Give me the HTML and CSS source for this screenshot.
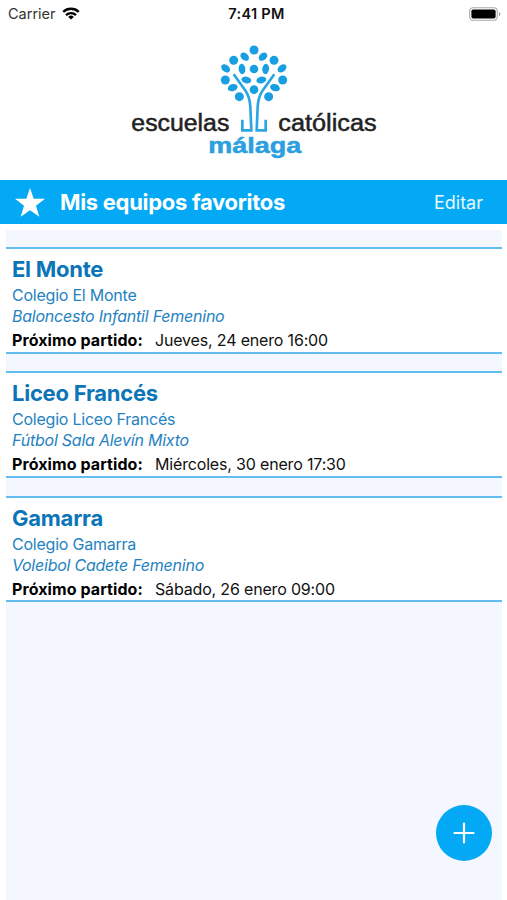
FILE: index.html
```html
<!DOCTYPE html>
<html lang="es">
<head>
<meta charset="utf-8">
<meta name="viewport" content="width=device-width, initial-scale=1">
<title>Mis equipos favoritos</title>
<link rel="stylesheet" href="styles.css">
</head>
<body>
<div class="app">
  <header class="status">
    <div class="carrier"><span class="carrier-name">Carrier</span>
      <svg class="wifi" viewBox="0 0 18 13"><g fill="none" stroke="#000" stroke-width="2.3"><path d="M1.2 4.9a11.2 11.2 0 0 1 15.6 0"/><path d="M4 8.1a7.2 7.2 0 0 1 10 0"/></g><path d="M9 12.6 6.2 9.9a4 4 0 0 1 5.6 0z"/></svg>
    </div>
    <span class="time">7:41 PM</span>
    <svg class="battery" viewBox="0 0 32 14"><rect x=".7" y=".7" width="27.6" height="12.6" rx="3.6" fill="#fff" stroke="#aaa" stroke-width="1.1"/><rect x="2.4" y="2.4" width="24.2" height="9.2" rx="1.8"/><path d="M30 5v4q1.3-.6 1.3-2T30 5" fill="#999"/></svg>
  </header>
  <div class="brand">
    <svg class="logo" viewBox="0 0 810 405" role="img" aria-label="escuelas católicas málaga">
      <g fill="#189fe1">
        <circle cx="402" cy="45" r="13.5"/><circle cx="341" cy="76" r="13.5"/><circle cx="462" cy="76" r="13.5"/>
        <circle cx="402" cy="102" r="13"/><circle cx="316" cy="135" r="13.5"/><circle cx="488" cy="135" r="13.5"/>
        <circle cx="402" cy="164" r="13"/><circle cx="358" cy="185" r="13.5"/><circle cx="446" cy="185" r="13.5"/>
        <ellipse cx="374" cy="65" rx="14.5" ry="10.5" transform="rotate(42 374 65)"/>
        <ellipse cx="429" cy="65" rx="14.5" ry="10.5" transform="rotate(-42 429 65)"/>
        <ellipse cx="317" cy="100" rx="15" ry="10.5" transform="rotate(40 317 100)"/>
        <ellipse cx="486" cy="100" rx="15" ry="10.5" transform="rotate(-40 486 100)"/>
        <ellipse cx="366" cy="102" rx="10" ry="15.5" transform="rotate(-8 366 102)"/>
        <ellipse cx="437" cy="102" rx="10" ry="15.5" transform="rotate(8 437 102)"/>
        <ellipse cx="379" cy="135" rx="15" ry="10" transform="rotate(12 379 135)"/>
        <ellipse cx="424" cy="135" rx="15" ry="10" transform="rotate(-12 424 135)"/>
        <ellipse cx="338" cy="158" rx="15" ry="10.5" transform="rotate(-18 338 158)"/>
        <ellipse cx="465" cy="158" rx="15" ry="10.5" transform="rotate(18 465 158)"/>
      </g>
      <g fill="none" stroke="#2ba6e3" stroke-width="8">
        <path d="M341 118 375 165Q389 184 391 215L394 286H367V254"/>
        <path d="M463 118 429 165Q415 184 413 215L410 286H437V254"/>
      </g>
      <g class="logo-name">
        <text x="34" y="287" textLength="294" lengthAdjust="spacingAndGlyphs">escuelas</text>
        <text x="475" y="287" textLength="295" lengthAdjust="spacingAndGlyphs">católicas</text>
      </g>
      <text class="logo-city" x="265" y="355" textLength="279" lengthAdjust="spacingAndGlyphs">málaga</text>
    </svg>
  </div>
  <div class="bar">
    <svg class="star" viewBox="0 0 30 29"><path d="m15 0 3.700 10.800H30l-9 7 3.300 11L15 22.200 5.700 28.800l3.300-11-9-7h11.300z"/></svg>
    <h1 class="title">Mis equipos favoritos</h1>
    <span class="edit">Editar</span>
  </div>
  <main class="list">
    <article class="card">
      <h2 class="team">El Monte</h2>
      <p class="school">Colegio El Monte</p>
      <p class="league">Baloncesto Infantil Femenino</p>
      <p class="match"><b class="label">Próximo partido:</b><span class="date">Jueves, 24 enero 16:00</span></p>
    </article>
    <article class="card">
      <h2 class="team">Liceo Francés</h2>
      <p class="school">Colegio Liceo Francés</p>
      <p class="league">Fútbol Sala Alevín Mixto</p>
      <p class="match"><b class="label">Próximo partido:</b><span class="date">Miércoles, 30 enero 17:30</span></p>
    </article>
    <article class="card">
      <h2 class="team">Gamarra</h2>
      <p class="school">Colegio Gamarra</p>
      <p class="league">Voleibol Cadete Femenino</p>
      <p class="match"><b class="label">Próximo partido:</b><span class="date">Sábado, 26 enero 09:00</span></p>
    </article>
  </main>
  <button class="add" aria-label="Añadir equipo"><svg viewBox="0 0 56 56"><path d="M28 18.500v19M18.500 28h19" stroke="#fff" stroke-width="2.200" stroke-linecap="round"/></svg></button>
</div>
</body>
</html>
```
FILE: styles.css
```css
* { box-sizing: border-box; margin: 0; padding: 0; }
body { background: #fff; font-family: Inter, "Liberation Sans", sans-serif; color: #111; }
.app { position: relative; display: flex; flex-direction: column; height: 900px; overflow: hidden; }
.status { display: grid; grid-template-columns: 1fr auto 1fr; align-items: center; height: 27px; padding: 0 6px 0 8px; font-size: 14.5px; }
.carrier { display: flex; align-items: center; gap: 6px; color: #333; }
.wifi { width: 18px; height: 13px; }
.time { padding-left: 4px; font-size: 14.5px; font-weight: 600; letter-spacing: 0.3px; }
.battery { justify-self: end; width: 32px; height: 14px; }
.brand { display: flex; justify-content: center; height: 153px; padding: 8px 0 0 3px; }
.logo { width: 270px; height: 135px; }
.logo-name { font: 70px "Liberation Sans", sans-serif; fill: #222; stroke: #222; stroke-width: 1.5; }
.logo-city { font: bold 65px "Liberation Sans", sans-serif; fill: #2b9fe0; stroke: #2b9fe0; stroke-width: 1.5; }
.bar { display: flex; align-items: center; height: 44.4px; padding: 0 24px 0 15px; background: #03a9f4; color: #fff; }
.star { width: 30px; height: 29px; fill: #fff; }
.title { flex: 1; margin-left: 15px; font-size: 22px; font-weight: 700; letter-spacing: -0.3px; }
.edit { font-size: 18px; color: #e6f7ff; }
.list { flex: 1; display: flex; flex-direction: column; gap: 17.7px; margin: 5.6px 5px 0 6px; padding-top: 17px; background: #f4f7ff; }
.card { height: 106.6px; padding: 7px 6px 0; background: #fff; border: solid #62bdf0; border-width: 2px 0; }
.team { height: 27px; line-height: 27px; font-size: 22px; font-weight: 700; letter-spacing: -0.25px; color: #0c75b8; }
.school, .league { font-size: 16px; letter-spacing: -0.23px; color: #2582c1; }
.school { height: 22px; line-height: 24px; }
.league { height: 23px; line-height: 22px; font-style: italic; }
.match { display: flex; gap: 12px; height: 23px; line-height: 25px; font-size: 16px; }
.label { width: 131px; font-weight: 700; letter-spacing: 0.08px; color: #000; }
.date { letter-spacing: -0.17px; }
.add { position: absolute; right: 15px; bottom: 39.5px; width: 56px; height: 56px; border: 0; border-radius: 50%; background: #03a9f4; }
.add svg { display: block; width: 56px; height: 56px; }
```
